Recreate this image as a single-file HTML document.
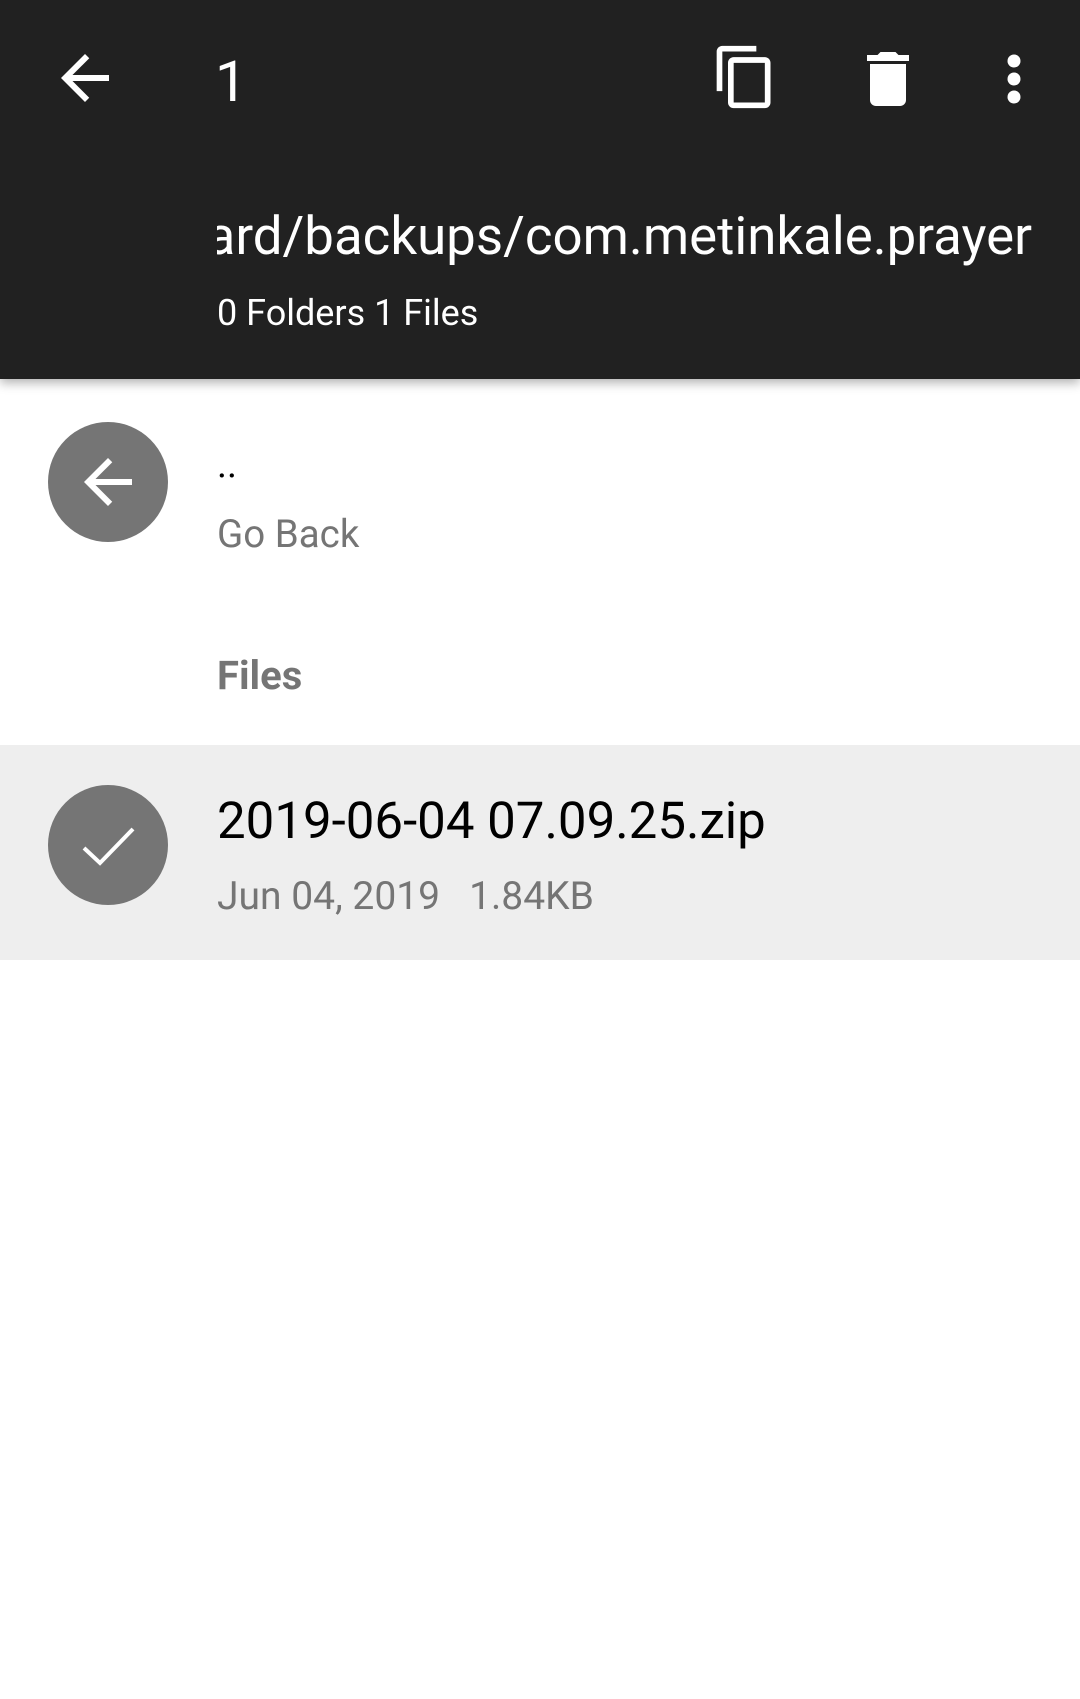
<!DOCTYPE html>
<html><head><meta charset="utf-8"><style>
html,body{margin:0;padding:0;}
body{width:1080px;height:1699px;background:#fff;position:relative;overflow:hidden;font-family:"Roboto","Liberation Sans",sans-serif;}
.bar{position:absolute;left:0;top:0;width:1080px;height:379px;background:#212121;box-shadow:0 4px 10px rgba(0,0,0,0.3);}
.t{position:absolute;white-space:nowrap;line-height:1;}
.circ{position:absolute;width:120px;height:120px;border-radius:60px;background:#757575;left:48px;}
</style></head><body>
<div class="bar">
  <svg style="position:absolute;left:49px;top:42px" width="72" height="72" viewBox="0 0 24 24"><path d="M20 11H7.83l5.59-5.59L12 4l-8 8 8 8 1.41-1.41L7.83 13H20v-2z" fill="#fff"/></svg>
  <div class="t" style="left:215px;top:53px;font-size:57px;color:#fff;">1</div>
  <svg style="position:absolute;left:711px;top:43px" width="68" height="68" viewBox="0 0 24 24"><path d="M16 1H4c-1.1 0-2 .9-2 2v14h2V3h12V1zm3 4H8c-1.1 0-2 .9-2 2v14c0 1.1.9 2 2 2h11c1.1 0 2-.9 2-2V7c0-1.1-.9-2-2-2zm0 16H8V7h11v14z" fill="#fff"/></svg>
  <svg style="position:absolute;left:852px;top:43px" width="72" height="72" viewBox="0 0 24 24"><path d="M6 19c0 1.1.9 2 2 2h8c1.1 0 2-.9 2-2V7H6v12zM19 4h-3.5l-1-1h-5l-1 1H5v2h14V4z" fill="#fff"/></svg>
  <svg style="position:absolute;left:1000px;top:48px" width="28" height="62"><circle cx="14" cy="13" r="6.5" fill="#fff"/><circle cx="14" cy="31" r="6.5" fill="#fff"/><circle cx="14" cy="49" r="6.5" fill="#fff"/></svg>
  <div style="position:absolute;left:217px;top:205px;width:815px;height:72px;overflow:hidden;">
    <div class="t" style="right:0;top:5px;font-size:52.8px;color:#fff;">/sdcard/backups/com.metinkale.prayer</div>
  </div>
  <div class="t" style="left:217px;top:295px;font-size:36px;color:#fff;">0 Folders 1 Files</div>
</div>

<div class="circ" style="top:422px;"></div>
<svg style="position:absolute;left:72px;top:446px" width="72" height="72" viewBox="0 0 24 24"><path d="M20 11H7.83l5.59-5.59L12 4l-8 8 8 8 1.41-1.41L7.83 13H20v-2z" fill="#fff"/></svg>
<div class="t" style="left:217px;top:446px;font-size:38px;color:#000;">..</div>
<div class="t" style="left:217px;top:516px;font-size:38.5px;color:#757575;">Go Back</div>
<div class="t" style="left:217px;top:656px;font-size:40px;color:#757575;font-weight:bold;">Files</div>

<div style="position:absolute;left:0;top:745px;width:1080px;height:215px;background:#eeeeee;"></div>
<div class="circ" style="top:785px;"></div>
<svg style="position:absolute;left:48px;top:785px" width="120" height="120"><path d="M36 63 L52 78 L85 44" stroke="#fff" stroke-width="4" fill="none"/></svg>
<div class="t" style="left:217px;top:796px;font-size:51px;color:#000;">2019-06-04 07.09.25.zip</div>
<div class="t" style="left:217px;top:877px;font-size:39px;color:#757575;">Jun 04, 2019&nbsp;&nbsp;&nbsp;1.84KB</div>
</body></html>
